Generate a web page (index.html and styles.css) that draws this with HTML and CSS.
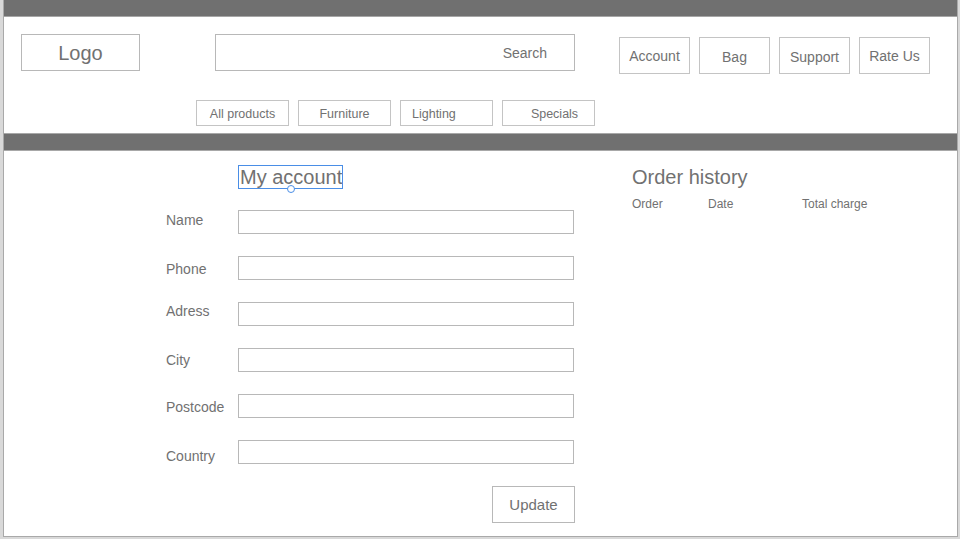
FILE: index.html
```html
<!DOCTYPE html>
<html lang="en">
<head>
<meta charset="utf-8">
<title>My account</title>
<link rel="stylesheet" href="styles.css">
</head>
<body>
<div class="frame">
  <div class="topbar"></div>
  <header class="header">
    <div class="row1">
      <div class="logo">Logo</div>
      <div class="search"><span>Search</span></div>
      <div class="actions">
        <div class="btn">Account</div>
        <div class="btn btn-low">Bag</div>
        <div class="btn btn-low">Support</div>
        <div class="btn">Rate Us</div>
      </div>
    </div>
    <nav class="nav">
      <div class="navitem">All products</div>
      <div class="navitem">Furniture</div>
      <div class="navitem nav-left">Lighting</div>
      <div class="navitem nav-right">Specials</div>
    </nav>
  </header>
  <div class="midbar"></div>
  <main class="main">
    <section class="account">
      <div class="heading-row">
        <h1 class="selected">My account<span class="handle"></span></h1>
      </div>
      <div class="form">
        <label class="lbl">Name</label><div class="field"></div>
        <label class="lbl lbl-down">Phone</label><div class="field"></div>
        <label class="lbl lbl-up">Adress</label><div class="field"></div>
        <label class="lbl lbl-mid">City</label><div class="field"></div>
        <label class="lbl lbl-down">Postcode</label><div class="field"></div>
        <label class="lbl lbl-down2">Country</label><div class="field"></div>
        <div class="update">Update</div>
      </div>
    </section>
    <section class="history">
      <h2>Order history</h2>
      <div class="cols">
        <span>Order</span><span>Date</span><span>Total charge</span>
      </div>
    </section>
  </main>
</div>
</body>
</html>
```
FILE: styles.css
```css
* { box-sizing: border-box; }
html, body { margin: 0; padding: 0; }
body {
  background: #d9d9d9;
  font-family: "Liberation Sans", Arial, sans-serif;
  color: #717171;
  width: 960px;
  height: 539px;
  overflow: hidden;
}
.frame {
  margin-left: 3px;
  width: 955px;
  height: 537px;
  background: #fff;
  border: 1px solid #a9a9a9;
  border-top: none;
}
.topbar {
  height: 17px;
  background: #707070;
  border-bottom: 1px solid #a6a6a6;
}
.header {
  height: 116px;
  padding: 17px 0 0 17px;
}
.row1 {
  display: flex;
  align-items: flex-start;
}
.logo {
  width: 119px;
  height: 37px;
  border: 1px solid #b8b8b8;
  font-size: 20px;
  display: flex;
  align-items: center;
  justify-content: center;
  padding-top: 1px;
}
.search {
  margin-left: 75px;
  width: 360px;
  height: 37px;
  border: 1px solid #b8b8b8;
  font-size: 14px;
  display: flex;
  align-items: center;
  justify-content: flex-end;
  padding: 0 27px 0 0;
}
.actions {
  margin-left: 44px;
  margin-top: 3px;
  display: flex;
  gap: 9px;
}
.btn {
  width: 71px;
  height: 37px;
  border: 1px solid #c4c4c4;
  font-size: 14px;
  display: flex;
  align-items: center;
  justify-content: center;
}
.btn-low { padding-top: 3px; }
.nav {
  margin: 26px 0 0 175px;
  display: flex;
  gap: 9px;
}
.navitem {
  width: 93px;
  height: 26px;
  border: 1px solid #c4c4c4;
  font-size: 12.5px;
  display: flex;
  align-items: center;
  justify-content: center;
  padding-top: 2px;
}
.nav-left { justify-content: flex-start; padding-left: 11px; }
.nav-right { padding-left: 12px; }
.midbar {
  height: 18px;
  background: #707070;
  border-top: 1px solid #a8a8a8;
  border-bottom: 1px solid #a8a8a8;
}
.main {
  display: flex;
  padding: 14px 0 0 162px;
}
.account { width: 409px; }
.heading-row { padding-left: 72px; }
h1, h2 { margin: 0; font-weight: normal; }
.selected {
  position: relative;
  display: inline-block;
  font-size: 20px;
  line-height: 22px;
  height: 24px;
  width: 105px;
  border: 1px solid #4a8ee6;
  padding-left: 1px;
  white-space: nowrap;
}
.handle {
  position: absolute;
  left: 48px;
  bottom: -5px;
  width: 8px;
  height: 8px;
  border-radius: 50%;
  border: 1px solid #4a8ee6;
  background: #fff;
}
.form {
  margin-top: 21px;
  display: grid;
  grid-template-columns: 72px 336px;
  row-gap: 22px;
  align-items: center;
}
.lbl {
  font-size: 14px;
  line-height: 16px;
  position: relative;
  top: -2px;
}
.lbl-down { top: 1px; }
.lbl-mid { top: 0; }
.lbl-up { top: -3px; }
.lbl-down2 { top: 4px; }
.field {
  height: 24px;
  border: 1px solid #b8b8b8;
}
.update {
  grid-column: 2;
  justify-self: end;
  width: 83px;
  height: 37px;
  border: 1px solid #b8b8b8;
  font-size: 15px;
  display: flex;
  align-items: center;
  justify-content: center;
  margin-right: -1px;
}
.history { margin-left: 57px; }
.history h2 {
  font-size: 20px;
  line-height: 24px;
}
.cols {
  margin-top: 8px;
  display: grid;
  grid-template-columns: 76px 94px auto;
  font-size: 12px;
  line-height: 14px;
}
```
